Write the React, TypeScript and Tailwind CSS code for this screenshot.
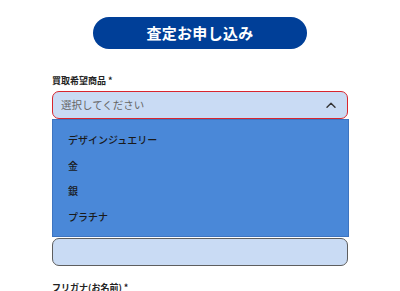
const items = ["デザインジュエリー", "金", "銀", "プラチナ"];

export default function App() {
  return (
    <div
      className="w-[400px] h-[291px] overflow-hidden bg-white"
      style={{ fontFamily: '"Noto Sans CJK JP", "Noto Sans", sans-serif' }}
    >
      <div className="pt-[17px] flex justify-center">
        <button className="w-[214px] h-[32px] rounded-full bg-[#003f98] text-white font-bold text-[15px] tracking-[0.02em] flex items-center justify-center">
          査定お申し込み
        </button>
      </div>

      <div className="px-[52px]">
        <p className="mt-[25px] text-[9px] leading-[13px] font-bold text-[#222]">買取希望商品 *</p>

        <div className="relative mt-[4px]">
          <div className="h-[28px] rounded-[7px] border-[1.5px] border-[#d8262e] bg-[#c9dbf4] flex items-center justify-between pl-[8px] pr-[11px]">
            <span className="text-[10.5px] text-[#666]">選択してください</span>
            <svg width="10" height="6" viewBox="0 0 10 6" fill="none">
              <path d="M1 5.2 5 1.2l4 4" stroke="#333" strokeWidth="1.4" strokeLinecap="round" strokeLinejoin="round" />
            </svg>
          </div>
          <ul className="absolute left-0 top-full w-[297px] h-[118px] bg-[#4a88d8] border border-[#3d74c0] pt-[7px] z-10">
            {items.map((item) => (
              <li key={item} className="h-[25.5px] flex items-center pl-[15px] text-[10px] text-[#1a1a1a] font-medium">
                {item}
              </li>
            ))}
          </ul>
        </div>

        <div className="mt-[119px] h-[28px] rounded-[7px] border-[1.5px] border-[#5e5e5e] bg-[#c9dbf4]" />

        <p className="mt-[15px] text-[9px] leading-[13px] font-bold text-[#222]">フリガナ(お名前) *</p>
      </div>
    </div>
  );
}
